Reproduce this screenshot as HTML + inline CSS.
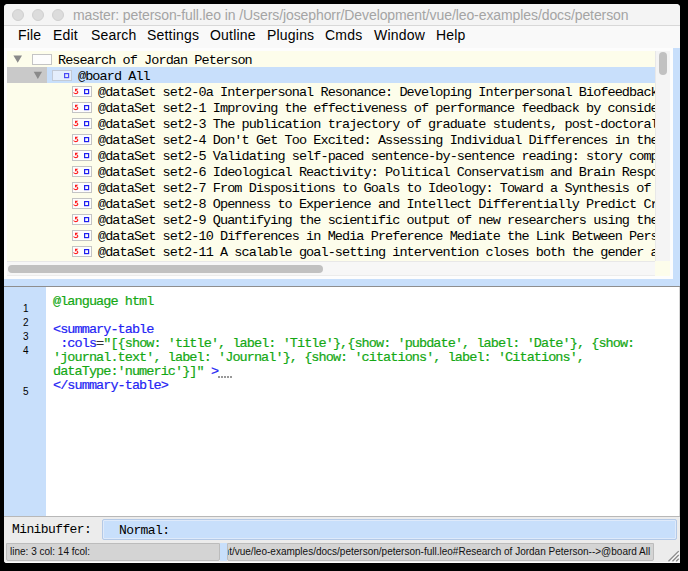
<!DOCTYPE html>
<html><head><meta charset="utf-8">
<style>
*{box-sizing:border-box;margin:0;padding:0}
html,body{width:688px;height:571px;overflow:hidden;background:#000}
.a{position:absolute}
#win{left:4px;top:4px;width:676px;height:559px;background:#ececec;border-radius:4px 4px 0 3px;overflow:hidden;box-shadow:inset 0 -1px 0 #fafafa}
#title{left:0;top:0;width:676px;height:22px;background:#f4f4f4;border-bottom:1px solid #d8d8d8}
.tl{width:12px;height:12px;border-radius:50%;background:#dcdcdc;border:1px solid #d0d0d0;top:5px}
#ttext{left:69px;top:3px;font:14px "Liberation Sans",sans-serif;letter-spacing:-0.09px;color:#a4a4a4;white-space:nowrap}
#menu{left:0;top:22px;width:676px;height:22px;background:#f9f9f9;font:14px "Liberation Sans",sans-serif;letter-spacing:0.2px;color:#000}
#menu span{position:absolute;top:1px}
#tframe{left:0;top:44px;width:669px;height:231px;background:#fdfdfd}
#tree{left:3px;top:47px;width:648px;height:210px;background:#fdfdeb;overflow:hidden;font:13.5px "Liberation Mono",monospace;letter-spacing:-0.925px;color:#000}
.row{position:absolute;left:0;width:648px;height:16px;white-space:nowrap}
.row .t{position:absolute;top:1.5px;line-height:16px}
.ico{position:absolute;width:20px;height:11px;border:1px solid #c4c4c4;background:#fdfdfd}
.tri{position:absolute;width:0;height:0;border-left:4.5px solid transparent;border-right:4.5px solid transparent;border-top:7px solid #8a8a8a}
#vsb{left:651px;top:47px;width:15px;height:210px;background:#f4f4f4;border-left:1px solid #e8e8e8}
#vthumb{left:3px;top:1px;width:8px;height:22.5px;border-radius:4px;background:#c1c1c1}
#hsb{left:3px;top:257px;width:648px;height:15px;background:#f7f7f7;border-top:1px solid #e8e8e8;border-bottom:1px solid #ececec}
#hthumb{left:1px;top:3px;width:315px;height:8px;border-radius:4px;background:#c1c1c1}
#corner{left:651px;top:257px;width:15px;height:15px;background:#fdfdeb}
#splitR{left:669px;top:44px;width:7px;height:238px;background:#c8dffb}
#splitB{left:0;top:275px;width:676px;height:7px;background:#c8dffb}
#bline{left:0;top:282px;width:676px;height:1px;background:#8e8e8e}
#body{left:0;top:283px;width:676px;height:229px;background:#fff;border-right:1px solid #d4d4d4}
#gutter{left:0;top:0;width:42px;height:229px;background:#c8dffb;font:10px "Liberation Sans",sans-serif;color:#000}
#gutter div{position:absolute;left:19px;line-height:12px}
#code{left:49px;top:8px;font:13.5px "Liberation Mono",monospace;letter-spacing:-0.925px;line-height:14px;white-space:pre;color:#14a814;-webkit-text-stroke:0.2px}
.b{color:#2424f4}.k{color:#333}.g{color:#14a814}
.dots{display:inline-block;width:15px;height:2px;margin-left:0;vertical-align:-3px;background:repeating-linear-gradient(90deg,#999 0,#999 2px,transparent 2px,transparent 3px)}
#mline{left:0;top:512px;width:676px;height:1px;background:#b8b8b8}
#mini{left:0;top:513px;width:676px;height:26px;background:#ececec}
#mlabel{left:8px;top:5px;font:13px "Liberation Mono",monospace;letter-spacing:-0.6px;color:#000}
#minput{left:98px;top:2px;width:575px;height:21px;background:#c8dffb;border:1px solid #b4c9e6;border-radius:2px;box-shadow:inset 0 0 0 1px #dfeafa;font:13px "Liberation Mono",monospace;letter-spacing:-0.6px;color:#000}
#status{left:0;top:539px;width:676px;height:19px}
.sf{position:absolute;top:0;height:18px;border-radius:0 0 2px 2px;background:#d4d4d4;border:1px solid #bcbcbc;font:11px "Liberation Sans",sans-serif;color:#111;white-space:nowrap;overflow:hidden;line-height:15px}
</style></head><body>
<div id="win" class="a">
 <div id="title" class="a">
  <div class="a tl" style="left:8px"></div>
  <div class="a tl" style="left:28px"></div>
  <div class="a tl" style="left:48px"></div>
  <div id="ttext" class="a">master: peterson-full.leo in /Users/josephorr/Development/vue/leo-examples/docs/peterson</div>
 </div>
 <div id="menu" class="a">
  <span style="left:14px">File</span><span style="left:49px">Edit</span><span style="left:87px">Search</span><span style="left:143px">Settings</span><span style="left:206px">Outline</span><span style="left:263px">Plugins</span><span style="left:321px">Cmds</span><span style="left:370px">Window</span><span style="left:432px">Help</span>
 </div>
 <div id="tframe" class="a"></div>
 <div id="tree" class="a">
  <div class="row" style="top:0">
   <svg class="a" style="left:6px;top:4px" width="10" height="9"><polygon points="0.4,0.6 9,0.6 4.7,7.8" fill="#8a8a8a"/></svg>
   <div class="ico" style="left:25px;top:3px"></div>
   <div class="t" style="left:51px">Research of Jordan Peterson</div>
  </div>
  <div class="row" style="top:16px;background:#c8dffb">
   <div class="a" style="left:0;top:0;width:40px;height:16px;background:#c9c9c9"></div>
   <svg class="a" style="left:26px;top:4px" width="10" height="9"><polygon points="0.7,0.7 9,0.7 4.85,7.9" fill="#8a8a8a"/></svg>
   <div class="ico" style="left:45px;top:3px;background:#e4eefc;border-color:#c2cad6"><svg class="a" style="left:0;top:0" width="18" height="9" viewBox="0 0 18 9"><rect x="11.6" y="2.6" width="4" height="4" stroke="#4a4af6" stroke-width="1.2" fill="none"/></svg></div>
   <div class="t" style="left:71px">@board All</div>
  </div>
<div class="row" style="top:32px"><div class="ico" style="left:65px;top:3px"><svg class="a" style="left:0;top:0" width="18" height="9" viewBox="0 0 18 9"><polygon points="2,1.8 5.3,1.8 2,4.7" fill="#ff1a1a"/><path d="M3.4 3.8Q4.9 4.1 4.8 5.3Q4.6 6.6 2.8 6.6Q1.5 6.6 0.5 5.5" stroke="#ff2020" stroke-width="1.1" fill="none"/><rect x="11.6" y="2.6" width="4" height="4" stroke="#2020f0" stroke-width="1.2" fill="none"/></svg></div><div class="t" style="left:91px">@dataSet set2-0a Interpersonal Resonance: Developing Interpersonal Biofeedback for the Promotion</div></div>
<div class="row" style="top:48px"><div class="ico" style="left:65px;top:3px"><svg class="a" style="left:0;top:0" width="18" height="9" viewBox="0 0 18 9"><polygon points="2,1.8 5.3,1.8 2,4.7" fill="#ff1a1a"/><path d="M3.4 3.8Q4.9 4.1 4.8 5.3Q4.6 6.6 2.8 6.6Q1.5 6.6 0.5 5.5" stroke="#ff2020" stroke-width="1.1" fill="none"/><rect x="11.6" y="2.6" width="4" height="4" stroke="#2020f0" stroke-width="1.2" fill="none"/></svg></div><div class="t" style="left:91px">@dataSet set2-1 Improving the effectiveness of performance feedback by considering</div></div>
<div class="row" style="top:64px"><div class="ico" style="left:65px;top:3px"><svg class="a" style="left:0;top:0" width="18" height="9" viewBox="0 0 18 9"><polygon points="2,1.8 5.3,1.8 2,4.7" fill="#ff1a1a"/><path d="M3.4 3.8Q4.9 4.1 4.8 5.3Q4.6 6.6 2.8 6.6Q1.5 6.6 0.5 5.5" stroke="#ff2020" stroke-width="1.1" fill="none"/><rect x="11.6" y="2.6" width="4" height="4" stroke="#2020f0" stroke-width="1.2" fill="none"/></svg></div><div class="t" style="left:91px">@dataSet set2-3 The publication trajectory of graduate students, post-doctoral fellows</div></div>
<div class="row" style="top:80px"><div class="ico" style="left:65px;top:3px"><svg class="a" style="left:0;top:0" width="18" height="9" viewBox="0 0 18 9"><polygon points="2,1.8 5.3,1.8 2,4.7" fill="#ff1a1a"/><path d="M3.4 3.8Q4.9 4.1 4.8 5.3Q4.6 6.6 2.8 6.6Q1.5 6.6 0.5 5.5" stroke="#ff2020" stroke-width="1.1" fill="none"/><rect x="11.6" y="2.6" width="4" height="4" stroke="#2020f0" stroke-width="1.2" fill="none"/></svg></div><div class="t" style="left:91px">@dataSet set2-4 Don&#x27;t Get Too Excited: Assessing Individual Differences in the</div></div>
<div class="row" style="top:96px"><div class="ico" style="left:65px;top:3px"><svg class="a" style="left:0;top:0" width="18" height="9" viewBox="0 0 18 9"><polygon points="2,1.8 5.3,1.8 2,4.7" fill="#ff1a1a"/><path d="M3.4 3.8Q4.9 4.1 4.8 5.3Q4.6 6.6 2.8 6.6Q1.5 6.6 0.5 5.5" stroke="#ff2020" stroke-width="1.1" fill="none"/><rect x="11.6" y="2.6" width="4" height="4" stroke="#2020f0" stroke-width="1.2" fill="none"/></svg></div><div class="t" style="left:91px">@dataSet set2-5 Validating self-paced sentence-by-sentence reading: story comprehension</div></div>
<div class="row" style="top:112px"><div class="ico" style="left:65px;top:3px"><svg class="a" style="left:0;top:0" width="18" height="9" viewBox="0 0 18 9"><polygon points="2,1.8 5.3,1.8 2,4.7" fill="#ff1a1a"/><path d="M3.4 3.8Q4.9 4.1 4.8 5.3Q4.6 6.6 2.8 6.6Q1.5 6.6 0.5 5.5" stroke="#ff2020" stroke-width="1.1" fill="none"/><rect x="11.6" y="2.6" width="4" height="4" stroke="#2020f0" stroke-width="1.2" fill="none"/></svg></div><div class="t" style="left:91px">@dataSet set2-6 Ideological Reactivity: Political Conservatism and Brain Responses</div></div>
<div class="row" style="top:128px"><div class="ico" style="left:65px;top:3px"><svg class="a" style="left:0;top:0" width="18" height="9" viewBox="0 0 18 9"><polygon points="2,1.8 5.3,1.8 2,4.7" fill="#ff1a1a"/><path d="M3.4 3.8Q4.9 4.1 4.8 5.3Q4.6 6.6 2.8 6.6Q1.5 6.6 0.5 5.5" stroke="#ff2020" stroke-width="1.1" fill="none"/><rect x="11.6" y="2.6" width="4" height="4" stroke="#2020f0" stroke-width="1.2" fill="none"/></svg></div><div class="t" style="left:91px">@dataSet set2-7 From Dispositions to Goals to Ideology: Toward a Synthesis of</div></div>
<div class="row" style="top:144px"><div class="ico" style="left:65px;top:3px"><svg class="a" style="left:0;top:0" width="18" height="9" viewBox="0 0 18 9"><polygon points="2,1.8 5.3,1.8 2,4.7" fill="#ff1a1a"/><path d="M3.4 3.8Q4.9 4.1 4.8 5.3Q4.6 6.6 2.8 6.6Q1.5 6.6 0.5 5.5" stroke="#ff2020" stroke-width="1.1" fill="none"/><rect x="11.6" y="2.6" width="4" height="4" stroke="#2020f0" stroke-width="1.2" fill="none"/></svg></div><div class="t" style="left:91px">@dataSet set2-8 Openness to Experience and Intellect Differentially Predict Creative</div></div>
<div class="row" style="top:160px"><div class="ico" style="left:65px;top:3px"><svg class="a" style="left:0;top:0" width="18" height="9" viewBox="0 0 18 9"><polygon points="2,1.8 5.3,1.8 2,4.7" fill="#ff1a1a"/><path d="M3.4 3.8Q4.9 4.1 4.8 5.3Q4.6 6.6 2.8 6.6Q1.5 6.6 0.5 5.5" stroke="#ff2020" stroke-width="1.1" fill="none"/><rect x="11.6" y="2.6" width="4" height="4" stroke="#2020f0" stroke-width="1.2" fill="none"/></svg></div><div class="t" style="left:91px">@dataSet set2-9 Quantifying the scientific output of new researchers using the</div></div>
<div class="row" style="top:176px"><div class="ico" style="left:65px;top:3px"><svg class="a" style="left:0;top:0" width="18" height="9" viewBox="0 0 18 9"><polygon points="2,1.8 5.3,1.8 2,4.7" fill="#ff1a1a"/><path d="M3.4 3.8Q4.9 4.1 4.8 5.3Q4.6 6.6 2.8 6.6Q1.5 6.6 0.5 5.5" stroke="#ff2020" stroke-width="1.1" fill="none"/><rect x="11.6" y="2.6" width="4" height="4" stroke="#2020f0" stroke-width="1.2" fill="none"/></svg></div><div class="t" style="left:91px">@dataSet set2-10 Differences in Media Preference Mediate the Link Between Personality</div></div>
<div class="row" style="top:192px"><div class="ico" style="left:65px;top:3px"><svg class="a" style="left:0;top:0" width="18" height="9" viewBox="0 0 18 9"><polygon points="2,1.8 5.3,1.8 2,4.7" fill="#ff1a1a"/><path d="M3.4 3.8Q4.9 4.1 4.8 5.3Q4.6 6.6 2.8 6.6Q1.5 6.6 0.5 5.5" stroke="#ff2020" stroke-width="1.1" fill="none"/><rect x="11.6" y="2.6" width="4" height="4" stroke="#2020f0" stroke-width="1.2" fill="none"/></svg></div><div class="t" style="left:91px">@dataSet set2-11 A scalable goal-setting intervention closes both the gender and</div></div>
 </div>
 <div id="vsb" class="a"><div id="vthumb" class="a"></div></div>
 <div id="hsb" class="a"><div id="hthumb" class="a"></div></div>
 <div id="corner" class="a"></div>
 <div id="splitR" class="a"></div>
 <div id="splitB" class="a"></div>
 <div id="bline" class="a"></div>
 <div id="body" class="a">
  <div id="gutter" class="a"><div style="top:16px">1</div><div style="top:30px">2</div><div style="top:44px">3</div><div style="top:58px">4</div><div style="top:99px">5</div></div>
  <div id="code" class="a"><span class="g">@language html</span>

<span class="b">&lt;summary-table</span>
<span class="b"> :cols</span><span class="k">=</span><span class="g">"[{show: 'title', label: 'Title'},{show: 'pubdate', label: 'Date'}, {show:</span>
<span class="g">'journal.text', label: 'Journal'}, {show: 'citations', label: 'Citations',</span>
<span class="g">dataType:'numeric'}]"</span> <span class="b">&gt;</span><span class="dots"></span>
<span class="b">&lt;/summary-table&gt;</span></div>
 </div>
 <div id="mline" class="a"></div>
 <div id="mini" class="a">
  <div id="mlabel" class="a">Minibuffer:</div>
  <div id="minput" class="a"><span class="a" style="left:16px;top:3px">Normal:</span></div>
 </div>
 <div id="status" class="a">
  <div class="sf" style="left:2px;width:214px"><span class="a" style="left:3px;top:0;transform:scaleX(0.91);transform-origin:0 0">line: 3 col: 14 fcol:</span></div>
  <div class="a" style="left:216px;top:0;width:7px;height:18px;background:#c8dffb"></div>
  <div class="sf" style="left:223px;width:427px"><span class="a" style="right:3px;top:0;transform:scaleX(0.91);transform-origin:100% 0">/Users/josephorr/Development/vue/leo-examples/docs/peterson/peterson-full.leo#Research of Jordan Peterson--&gt;@board All</span></div>
<svg class="a" style="left:662px;top:6px" width="14" height="14"><g stroke="#fbfbfb" stroke-width="1.2"><path d="M3.5 13.3L13.7 3.1M7.5 13.3L13.7 7M11.2 13.3L13.7 10.8"/></g><g stroke="#8a8a8a" stroke-width="1.3"><path d="M2.5 12.3L12.7 2.1M6.5 12.3L12.7 6M10.2 12.3L12.7 9.8"/></g></svg>
 </div>
</div>
</body></html>
